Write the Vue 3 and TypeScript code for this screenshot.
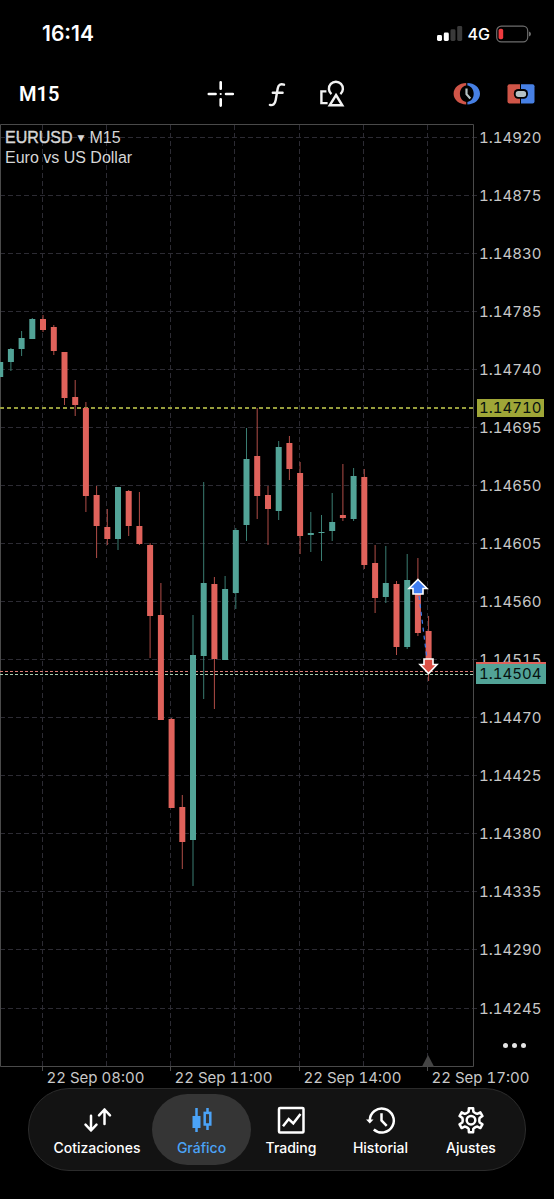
<script setup lang="ts">
import { ref } from 'vue'

type Candle = [high: number, top: number, bottom: number, low: number, up: boolean]

const candles: Candle[] = [
  [362, 362, 377, 377, true],
  [348, 349, 362, 371, true],
  [331, 338, 349, 356, true],
  [318, 319, 339, 339, true],
  [315, 319, 330, 332, false],
  [325, 327, 351, 355, false],
  [352, 352, 398, 405, false],
  [380, 397, 405, 416, false],
  [402, 408, 496, 512, false],
  [486, 495, 526, 558, false],
  [509, 527, 539, 545, false],
  [487, 487, 539, 550, true],
  [490, 491, 526, 536, false],
  [492, 526, 544, 545, false],
  [543, 545, 616, 658, false],
  [583, 615, 720, 720, false],
  [718, 719, 808, 808, false],
  [795, 807, 842, 869, false],
  [615, 655, 840, 886, true],
  [482, 583, 656, 699, true],
  [577, 584, 659, 709, false],
  [576, 589, 660, 660, true],
  [528, 530, 593, 609, true],
  [428, 459, 525, 541, true],
  [408, 456, 496, 519, false],
  [486, 495, 509, 545, false],
  [441, 447, 511, 520, true],
  [436, 443, 469, 480, false],
  [462, 473, 536, 554, false],
  [512, 533, 535, 552, true],
  [515, 532, 533, 561, true],
  [493, 522, 531, 541, true],
  [464, 515, 518, 521, false],
  [468, 476, 519, 521, true],
  [469, 477, 565, 569, false],
  [545, 563, 598, 613, false],
  [546, 583, 597, 603, true],
  [581, 584, 647, 655, false],
  [554, 580, 647, 649, true],
  [558, 584, 633, 636, false],
  [616, 631, 670, 681, false],
]

const candleX = (i: number) => Math.round((0.2 + i * 10.71) * 10) / 10

const prices = Array.from({ length: 16 }, (_, i) => ({
  label: ((114920 - i * 45) / 100000).toFixed(5),
  y: Math.floor(137 + i * 58.07) + 0.5,
}))

const columns = Array.from({ length: 7 }, (_, i) => Math.floor(42 + i * 64.3) + 0.5)

const times = ['22 Sep 08:00', '22 Sep 11:00', '22 Sep 14:00', '22 Sep 17:00'].map((label, i) => ({
  label,
  x: columns[i * 2],
}))

function gearPath(cx: number, cy: number): string {
  const steps: [number, number][] = [[-23, 8.4], [-15, 9], [-10, 12.2], [10, 12.2], [15, 9], [23, 8.4]]
  const points: string[] = []
  for (let tooth = 0; tooth < 6; tooth++) {
    for (const [offset, radius] of steps) {
      const angle = ((tooth * 60 + offset - 90) * Math.PI) / 180
      points.push(`${(cx + radius * Math.cos(angle)).toFixed(2)} ${(cy + radius * Math.sin(angle)).toFixed(2)}`)
    }
  }
  return `M${points.join('L')}Z`
}

const tabs = [
  { id: 'quotes', label: 'Cotizaciones' },
  { id: 'chart', label: 'Gráfico' },
  { id: 'trade', label: 'Trading' },
  { id: 'history', label: 'Historial' },
  { id: 'settings', label: 'Ajustes' },
]
const active = ref('chart')
</script>

<template>
  <div class="app">
    <header>
      <div class="status">
        <time class="clock">16:14</time>
        <div class="signals">
          <svg width="26" height="16" viewBox="0 0 26 16" aria-hidden="true">
            <rect x="0" y="9" width="5" height="6" rx="1.4" fill="#fff" />
            <rect x="6.8" y="6.5" width="5" height="8.5" rx="1.4" fill="#fff" />
            <rect x="13.5" y="3.3" width="5" height="11.7" rx="1.4" fill="#3a3a3a" />
            <rect x="20.2" y="0" width="5" height="15" rx="1.4" fill="#3a3a3a" />
          </svg>
          <span class="network">4G</span>
          <svg width="36" height="18" viewBox="0 0 36 18" aria-hidden="true">
            <rect x="1.7" y="1.2" width="31" height="15.6" rx="4.6" fill="none" stroke="#6d6d6d" stroke-width="1.2" />
            <rect x="3.6" y="3.8" width="4.6" height="10.4" rx="1.8" fill="#f03b3f" />
            <path d="M34 6.6q2 .8 2 2.5t-2 2.5z" fill="#6d6d6d" />
          </svg>
        </div>
      </div>

      <div class="toolbar">
        <button class="period" type="button">M15</button>
        <div class="tools">
          <button type="button" aria-label="Cruz">
            <svg width="28" height="28" viewBox="0 0 28 28" fill="none" stroke="#fff" stroke-width="2.6" stroke-linecap="round">
              <path d="M13.7 2.2v6.6M13.7 19.2v6.4M1.8 14h6.8M19 14h6.8" />
              <circle cx="13.7" cy="14" r="1.1" fill="#fff" stroke="none" />
            </svg>
          </button>
          <button type="button" aria-label="Indicadores">
            <svg width="28" height="28" viewBox="0 0 28 28" fill="none" stroke="#f2f2f2" stroke-width="2.4" stroke-linecap="round">
              <path d="M21 4.7C17.6 3.400 15.300 4.900 14.700 8.500L12.700 20C12 24 10 25.700 6.900 24.900M9.800 12.700H19.600" />
            </svg>
          </button>
          <button type="button" aria-label="Objetos">
            <svg width="28" height="28" viewBox="0 0 28 28" fill="none" stroke="#f2f2f2" stroke-width="2.4">
              <path d="M7.4 11.400H2.400V23.100H8.600" />
              <path d="M12.400 14.100A7 7 0 1 1 21.400 14.100" />
              <path d="M17 15L23.300 25.300H10.700Z" />
            </svg>
          </button>
        </div>
        <div class="trade-tools">
          <button type="button" aria-label="Sesiones">
            <svg width="28" height="28" viewBox="0 0 28 28">
              <path d="M13.2 3.1C6.4 3.2 .6 7.6.6 13.8s5.8 10.6 12.6 10.7V22C9.4 21.4 6.9 18 6.9 13.8S9.4 6.2 13.2 5.6Z" fill="#cf5548" />
              <path d="M14.4 3.1C21.2 3.2 27 7.6 27 13.8s-5.8 10.6-12.6 10.7V22c3.8-.6 6.3-4 6.3-8.2s-2.5-7.6-6.3-8.2Z" fill="#4780e4" />
              <path d="M13.5 8.4v5.8l3.8 4.2" fill="none" stroke="#b5c2c4" stroke-width="2.2" />
            </svg>
          </button>
          <button type="button" aria-label="Trading con un clic">
            <svg width="28" height="28" viewBox="0 0 28 28">
              <path d="M2.500 4.200H13v19.200H2.500q-2 0-2-2V6.200q0-2 2-2z" fill="#cf5548" />
              <path d="M14 4.200H25.500q2 0 2 2v15.200q0 2-2 2H14z" fill="#4780e4" />
              <rect x="6.900" y="9.100" width="14" height="9.600" rx="4.200" fill="#000" />
              <rect x="8.700" y="10.900" width="10.400" height="6" rx="2.600" fill="#b5c2c4" />
            </svg>
          </button>
        </div>
      </div>
    </header>

    <main class="chart">
      <svg class="plot" viewBox="0 120 554 968" role="img" aria-label="EURUSD M15">
        <g class="grid">
          <line v-for="p in prices" :key="p.label" x1="0" x2="478" :y1="p.y" :y2="p.y" />
          <line v-for="x in columns" :key="x" :x1="x" :x2="x" y1="125" y2="1066" />
        </g>
        <g class="frame">
          <path d="M0.5 1066.5V124.5H473.5V1066.5Z" />
          <line v-for="t in times" :key="t.label" :x1="t.x" :x2="t.x" y1="1066" y2="1071" />
        </g>

        <line class="high-line" x1="0" x2="474" y1="408" y2="408" />
        <line class="ask-line" x1="0" x2="474" y1="671.5" y2="671.5" />
        <line class="bid-line" x1="0" x2="474" y1="674.5" y2="674.5" />

        <g v-for="(c, i) in candles" :key="i" :class="c[4] ? 'rise' : 'fall'">
          <line :x1="candleX(i)" :x2="candleX(i)" :y1="c[0]" :y2="c[3]" />
          <rect :x="candleX(i) - 3" :y="c[1]" width="6" :height="c[2] - c[1]" />
        </g>

        <line class="deal" x1="418" y1="588" x2="428" y2="667" />
        <path class="buy" d="M418 579.5L427 588.5H423V594H413V588.5H409Z" />
        <path class="sell" d="M428.5 673.5L420 664.5H424V659H433V664.5H437Z" />
        <path d="M422 1066.5L428 1055L434 1066.5Z" fill="#444" />

        <g class="axis">
          <text v-for="p in prices" :key="p.label" x="479" :y="p.y + 5">{{ p.label }}</text>
          <text v-for="t in times" :key="t.label" :x="t.x + 4" y="1083">{{ t.label }}</text>
        </g>

        <rect x="477" y="399" width="67" height="18" fill="#9fa637" />
        <text class="tag" x="479" y="413">1.14710</text>
        <rect x="476" y="662" width="70" height="20" fill="#e0625b" />
        <rect x="476" y="664" width="70" height="20" fill="#52a397" />
        <text class="tag" x="479" y="679">1.14504</text>
      </svg>

      <div class="caption">
        <button class="symbol" type="button"><span class="name">EURUSD</span><span class="caret">▼</span>M15</button>
        <div>Euro vs US Dollar</div>
      </div>
      <button class="more" type="button" aria-label="Más"><i /><i /><i /></button>
    </main>

    <nav class="tabs">
      <button
        v-for="tab in tabs"
        :key="tab.id"
        type="button"
        class="tab"
        :class="{ active: tab.id === active }"
        @click="active = tab.id"
      >
        <svg width="28" height="28" viewBox="0 0 28 28" fill="none" stroke="currentColor" stroke-width="2.5" aria-hidden="true">
          <g v-if="tab.id === 'quotes'" stroke-linecap="round" stroke-linejoin="round">
            <path d="M8 9.8V24.5M2.5 18.7L8 24.5L13.5 18.7" />
            <path d="M21.5 18V3.5M16 9.3L21.5 3.5L27 9.3" />
          </g>
          <g v-else-if="tab.id === 'chart'">
            <rect x="4.5" y="10" width="8" height="12" fill="currentColor" stroke="none" />
            <path d="M8.5 2V26" />
            <rect x="16.7" y="6.9" width="5.6" height="11.6" />
            <path d="M19.5 2V6M19.5 19V24" />
          </g>
          <g v-else-if="tab.id === 'trade'">
            <rect x="2" y="2" width="24.5" height="24.5" rx="1" />
            <path d="M6 20.2L11.7 13L16.3 17.3L23.5 8" />
          </g>
          <g v-else-if="tab.id === 'history'">
            <path d="M2.8 14.5A12 12 0 1 1 6.8 23.5" />
            <path d="M-1 13.5H6.5L2.8 17.6Z" fill="currentColor" stroke="none" />
            <path d="M14.5 7.2V14.5L19.7 19.8" />
          </g>
          <g v-else>
            <path :d="gearPath(14, 14.2)" stroke-linejoin="round" />
            <circle cx="14" cy="14.2" r="4.3" />
          </g>
        </svg>
        <span>{{ tab.label }}</span>
      </button>
    </nav>
  </div>
</template>

<style>
html,
body {
  background: #000;
}
</style>

<style scoped>
.app {
  min-height: 100vh;
  box-sizing: border-box;
  padding-bottom: 29px;
  background: #000;
  color: #fff;
  font-family: Inter, 'Liberation Sans', sans-serif;
}

button {
  padding: 0;
  border: 0;
  background: none;
  color: inherit;
  font: inherit;
  cursor: pointer;
}

svg {
  display: block;
  overflow: visible;
}

.status {
  display: flex;
  align-items: center;
  justify-content: space-between;
  height: 67px;
  padding: 0 23px 0 42px;
}

.clock {
  font-size: 21px;
  font-weight: 600;
}

.signals {
  display: flex;
  align-items: center;
  gap: 5px;
}

.network {
  font-size: 16px;
  font-weight: 500;
}

.toolbar {
  display: grid;
  grid-template-columns: 1fr auto 1fr;
  align-items: center;
  height: 53px;
  padding: 0 19px;
}

.period {
  justify-self: start;
  font-family: Roboto, sans-serif;
  font-size: 20px;
  font-weight: 600;
}

.tools {
  display: flex;
  gap: 28px;
}

.trade-tools {
  display: flex;
  justify-self: end;
  gap: 26px;
}

.chart {
  position: relative;
}

.plot {
  width: 100%;
  height: auto;
}

.grid line {
  stroke: #2c2b33;
  stroke-dasharray: 5 3;
}

.frame {
  fill: none;
  stroke: #4a4a4a;
}

.high-line {
  stroke: #979d3c;
  stroke-width: 2;
  stroke-dasharray: 4 3;
}

.ask-line {
  stroke: #dd7d76;
  stroke-width: 1;
  stroke-dasharray: 3 2;
}

.bid-line {
  stroke: #a9cfb4;
  stroke-width: 1;
  stroke-dasharray: 3 2;
}

.rise {
  fill: #52a397;
  stroke: #3a7d72;
}

.fall {
  fill: #e0625b;
  stroke: #b04d47;
}

.rise rect,
.fall rect {
  stroke: none;
}

.deal {
  stroke: #3f7df0;
  stroke-width: 1.2;
  stroke-dasharray: 4 4;
}

.buy,
.sell {
  stroke: #fff;
  stroke-width: 1.6;
}

.buy {
  fill: #3f7df0;
}

.sell {
  fill: #dc5046;
}

.axis,
.tag {
  font-size: 15px;
  font-variant-numeric: tabular-nums;
}

.axis {
  fill: #c8c8c8;
}

.tag {
  fill: #06110f;
}

.caption {
  position: absolute;
  top: 8px;
  left: 5px;
  color: #d6d6d6;
  font-family: 'Liberation Sans', Arial, sans-serif;
  font-size: 16px;
  line-height: 20px;
}

.symbol {
  display: flex;
  align-items: center;
  gap: 5px;
}

.name {
  -webkit-text-stroke: 0.4px currentColor;
}

.caret {
  font-family: 'DejaVu Sans', sans-serif;
  font-size: 9px;
}

.more {
  position: absolute;
  right: 28px;
  bottom: 36px;
  display: flex;
  gap: 4px;
  padding: 4px 0;
}

.more i {
  width: 5px;
  height: 5px;
  border-radius: 50%;
  background: #e4e4e4;
}

.tabs {
  display: grid;
  grid-template-columns: 110fr 99fr 80fr 99fr 82fr;
  margin: 0 28px;
  padding: 5px 13px;
  border: 1px solid #2b2b2b;
  border-radius: 41px;
  background: #131313;
}

.tab {
  display: flex;
  flex-direction: column;
  align-items: center;
  gap: 5px;
  padding: 12px 0 8px;
  border-radius: 36px;
  font-size: 14px;
  font-weight: 500;
  line-height: 18px;
  white-space: nowrap;
}

.tab.active {
  background: #353535;
  color: #4ba3f7;
}
</style>
